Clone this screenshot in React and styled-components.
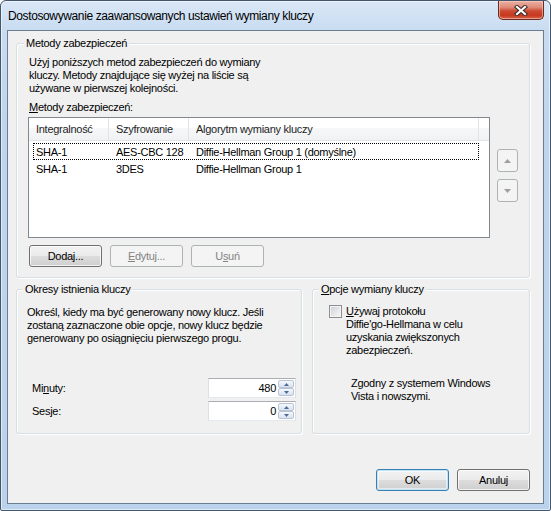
import React from "react";
import styled, { createGlobalStyle } from "styled-components";

const Global = createGlobalStyle`
  html, body { margin: 0; padding: 0; background: #ffffff; }
  body {
    font-family: "Liberation Sans", Arial, sans-serif;
    font-size: 11px;
    letter-spacing: -0.28px;
    color: #000;
  }
  * { box-sizing: border-box; }
`;

const Window = styled.div`
  width: 551px;
  height: 511px;
  border: 1px solid #44566b;
  border-radius: 6px 6px 2px 2px;
  background: linear-gradient(180deg, #dae7f6 0px, #c8dcf1 30px, #bed5ed 120px, #bad2eb 100%);
  box-shadow: inset 0 0 0 1px rgba(255, 255, 255, 0.55);
  padding: 0 6px 6px;
  display: flex;
  flex-direction: column;
`;

const TitleBar = styled.div`
  height: 29px;
  display: flex;
  align-items: flex-start;
`;

const TitleText = styled.div`
  flex: 1;
  align-self: center;
  padding-left: 1px;
  padding-top: 1px;
  font-family: "Liberation Sans", Arial, sans-serif;
  font-size: 12px;
  letter-spacing: -0.38px;
  color: #000;
  white-space: nowrap;
`;

const CloseButton = styled.div`
  width: 46px;
  height: 19px;
  border: 1px solid #6b2b20;
  border-top: none;
  border-radius: 0 0 5px 5px;
  background: linear-gradient(180deg, #ebb0a3 0%, #de8b78 35%, #cc4a32 55%, #c6391f 80%, #d4654b 100%);
  box-shadow: inset 0 0 0 1px rgba(255, 210, 200, 0.55);
  display: flex;
  align-items: center;
  justify-content: center;
`;

const Client = styled.div`
  flex: 1;
  background: #f0f0f0;
  border: 1px solid #6b7d91;
  display: flex;
  flex-direction: column;
  padding: 12px 13px 12px 8px;
`;

const GroupBox = styled.div`
  border: 1px solid #d5dfe5;
  border-radius: 3px;
  box-shadow: inset 1px 1px 0 #ffffff, 1px 1px 0 #ffffff;
  display: flex;
  flex-direction: column;
  height: ${(p) => p.$h}px;
  width: ${(p) => (p.$w ? `${p.$w}px` : "auto")};
  padding: ${(p) => p.$pad || "0"};
`;

const Legend = styled.div`
  align-self: flex-start;
  margin: -7px 0 0 ${(p) => p.$ml ?? 6}px;
  padding: 0 2px;
  line-height: 13px;
  background: #f0f0f0;
`;

const Text = styled.div`
  line-height: 13px;
  margin: ${(p) => p.$m || "0"};
`;

const ListRow = styled.div`
  display: flex;
  align-items: flex-start;
`;

const ListBox = styled.div`
  width: 462px;
  height: 121px;
  border: 1px solid #828790;
  background: #ffffff;
  display: flex;
  flex-direction: column;
`;

const Header = styled.div`
  display: flex;
  height: 23px;
  background: linear-gradient(180deg, #ffffff 0%, #ffffff 45%, #f6f7f9 46%, #f1f2f4 100%);
  border-bottom: 1px solid #e3e4e6;
`;

const HeaderCell = styled.div`
  width: ${(p) => p.$w}px;
  flex: ${(p) => (p.$fill ? 1 : "none")};
  border-right: ${(p) => (p.$fill ? "none" : "1px solid #e3e4e6")};
  padding-left: 7px;
  display: flex;
  align-items: center;
  color: #1e1e1e;
`;

const Rows = styled.div`
  padding: 2px 0 0 4px;
  display: flex;
  flex-direction: column;
`;

const Row = styled.div`
  display: flex;
  height: 17px;
  width: 446px;
  align-items: center;
  outline: ${(p) => (p.$focus ? "1px dotted #000" : "none")};
  outline-offset: -1px;
`;

const Cell = styled.div`
  width: ${(p) => p.$w}px;
  padding-left: ${(p) => p.$pl}px;
  white-space: nowrap;
`;

const ArrowColumn = styled.div`
  display: flex;
  flex-direction: column;
  gap: 7px;
  padding-top: 32px;
  margin-left: 7px;
`;

const Button = styled.div`
  width: ${(p) => p.$w || 73}px;
  height: ${(p) => p.$h || 22}px;
  border: 1px solid ${(p) => (p.$disabled ? "#adb2b5" : p.$default ? "#3c7fb1" : "#707070")};
  border-radius: 3px;
  background: ${(p) =>
    p.$disabled
      ? "#f4f4f4"
      : "linear-gradient(180deg, #f2f2f2 0%, #ebebeb 48%, #dddddd 50%, #cfcfcf 100%)"};
  box-shadow: ${(p) =>
    p.$disabled
      ? "none"
      : p.$default
      ? "inset 0 0 0 1px #bfe4f9, inset 0 0 0 2px rgba(255,255,255,0.5)"
      : "inset 0 0 0 1px rgba(255,255,255,0.75)"};
  color: ${(p) => (p.$disabled ? "#838383" : "#000")};
  display: flex;
  align-items: center;
  justify-content: center;
  line-height: 13px;
`;

const ButtonRow = styled.div`
  display: flex;
  gap: ${(p) => p.$gap || 9}px;
  margin: ${(p) => p.$m || "0"};
  justify-content: ${(p) => p.$justify || "flex-start"};
`;

const BottomRow = styled.div`
  display: flex;
  gap: 10px;
  margin-top: 11px;
`;

const Fields = styled.div`
  margin-top: auto;
  display: flex;
  flex-direction: column;
  gap: 3px;
`;

const FieldRow = styled.div`
  display: flex;
  align-items: center;
  justify-content: space-between;
  padding-left: 5px;
`;

const SpinBox = styled.div`
  width: 88px;
  height: 20px;
  border: 1px solid #abadb3;
  border-left-color: #dbdfe6;
  border-right-color: #dbdfe6;
  border-bottom-color: #e3e9ef;
  background: #ffffff;
  display: flex;
  align-items: stretch;
  padding: 1px 1px 1px 0;
`;

const SpinValue = styled.div`
  flex: 1;
  text-align: right;
  padding-right: 2px;
  line-height: 16px;
`;

const SpinButtons = styled.div`
  width: 16px;
  display: flex;
  flex-direction: column;
`;

const SpinHalf = styled.div`
  flex: 1;
  border: 1px solid #b8c4d6;
  border-radius: 2px;
  background: linear-gradient(180deg, #f5f8fc 0%, #e7edf6 50%, #d9e2ef 100%);
  display: flex;
  align-items: center;
  justify-content: center;
`;

const CheckRow = styled.div`
  display: flex;
  align-items: flex-start;
  gap: 4px;
  margin: 9px 0 0 15px;
`;

const CheckBox = styled.div`
  width: 13px;
  height: 13px;
  flex: none;
  border: 1px solid #8e8f8f;
  background: linear-gradient(135deg, #cbcfd5 0%, #e8e9eb 60%, #f6f6f6 100%);
  box-shadow: inset 0 0 0 1px #f4f4f4;
`;

const Footer = styled.div`
  margin-top: auto;
  display: flex;
  justify-content: flex-end;
  gap: 8px;
`;

const Tri = ({ up, color = "#a0a0a0", w = 7, h = 4 }) => (
  <svg width={w} height={h} viewBox={`0 0 ${w} ${h}`}>
    <polygon
      points={up ? `0,${h} ${w},${h} ${w / 2},0` : `0,0 ${w},0 ${w / 2},${h}`}
      fill={color}
    />
  </svg>
);

const CloseX = () => (
  <svg width="14" height="11" viewBox="0 0 14 11">
    <g strokeLinecap="square">
      <path d="M3 2 L11 9 M11 2 L3 9" stroke="#3b2a28" strokeWidth="4.2" />
      <path d="M3 2 L11 9 M11 2 L3 9" stroke="#ffffff" strokeWidth="2.2" />
    </g>
  </svg>
);

const Spin = ({ value }) => (
  <SpinBox>
    <SpinValue>{value}</SpinValue>
    <SpinButtons>
      <SpinHalf>
        <Tri up color="#4d6a96" w={5} h={3} />
      </SpinHalf>
      <SpinHalf>
        <Tri color="#4d6a96" w={5} h={3} />
      </SpinHalf>
    </SpinButtons>
  </SpinBox>
);

export default function App() {
  return (
    <>
      <Global />
      <Window>
        <TitleBar>
          <TitleText>Dostosowywanie zaawansowanych ustawień wymiany kluczy</TitleText>
          <CloseButton>
            <CloseX />
          </CloseButton>
        </TitleBar>
        <Client>
          <GroupBox $h={235} $pad="0 11px 0 11px">
            <Legend $ml={-4}>Metody zabezpieczeń</Legend>
            <Text $m="6px 0 0 1px">
              Użyj poniższych metod zabezpieczeń do wymiany
              <br />
              kluczy. Metody znajdujące się wyżej na liście są
              <br />
              używane w pierwszej kolejności.
            </Text>
            <Text $m="6px 0 3px 1px">
              <u>M</u>etody zabezpieczeń:
            </Text>
            <ListRow>
              <ListBox>
                <Header>
                  <HeaderCell $w={80}>Integralność</HeaderCell>
                  <HeaderCell $w={80}>Szyfrowanie</HeaderCell>
                  <HeaderCell $w={290}>Algorytm wymiany kluczy</HeaderCell>
                  <HeaderCell $fill />
                </Header>
                <Rows>
                  <Row $focus>
                    <Cell $w={76} $pl={3}>SHA-1</Cell>
                    <Cell $w={80} $pl={7}>AES-CBC 128</Cell>
                    <Cell $w={290} $pl={7}>Diffie-Hellman Group 1 (domyślne)</Cell>
                  </Row>
                  <Row>
                    <Cell $w={76} $pl={3}>SHA-1</Cell>
                    <Cell $w={80} $pl={7}>3DES</Cell>
                    <Cell $w={290} $pl={7}>Diffie-Hellman Group 1</Cell>
                  </Row>
                </Rows>
              </ListBox>
              <ArrowColumn>
                <Button $disabled $w={21} $h={23}>
                  <Tri up />
                </Button>
                <Button $disabled $w={21} $h={23}>
                  <Tri />
                </Button>
              </ArrowColumn>
            </ListRow>
            <ButtonRow $gap={8} $m="7px 0 0 1px">
              <Button>
                Doda<u>j</u>...
              </Button>
              <Button $disabled>
                <u>E</u>dytuj...
              </Button>
              <Button $disabled>
                U<u>s</u>uń
              </Button>
            </ButtonRow>
          </GroupBox>
          <BottomRow>
            <GroupBox $h={145} $w={286} $pad="0 5px 12px 10px">
              <Legend $ml={-4}>Okresy istnienia kluczy</Legend>
              <Text $m="10px 0 0 0">
                Określ, kiedy ma być generowany nowy klucz. Jeśli
                <br />
                zostaną zaznaczone obie opcje, nowy klucz będzie
                <br />
                generowany po osiągnięciu pierwszego progu.
              </Text>
              <Fields>
                <FieldRow>
                  <span>
                    Mi<u>n</u>uty:
                  </span>
                  <Spin value="480" />
                </FieldRow>
                <FieldRow>
                  <span>
                    Ses<u>j</u>e:
                  </span>
                  <Spin value="0" />
                </FieldRow>
              </Fields>
            </GroupBox>
            <GroupBox $h={145} $w={218} $pad="0 6px 0 1px">
              <Legend $ml={5}>
                <u>O</u>pcje wymiany kluczy
              </Legend>
              <CheckRow>
                <CheckBox />
                <Text>
                  <u>U</u>żywaj protokołu
                  <br />
                  Diffie'go-Hellmana w celu
                  <br />
                  uzyskania zwiększonych
                  <br />
                  zabezpieczeń.
                </Text>
              </CheckRow>
              <Text $m="20px 0 0 37px">
                Zgodny z systemem Windows
                <br />
                Vista i nowszymi.
              </Text>
            </GroupBox>
          </BottomRow>
          <Footer>
            <Button $default>OK</Button>
            <Button>Anuluj</Button>
          </Footer>
        </Client>
      </Window>
    </>
  );
}
